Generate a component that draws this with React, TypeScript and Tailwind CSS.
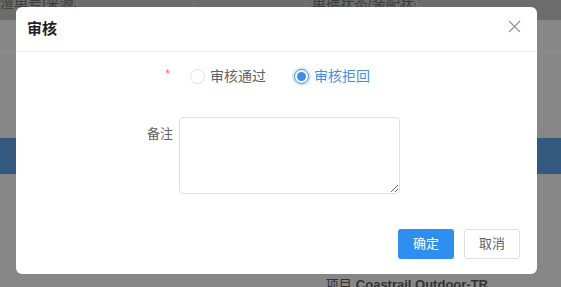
import React from "react";

export default function App() {
  const cjk = { fontFamily: '"Liberation Sans", "Noto Sans CJK SC", sans-serif' };
  return (
    <div className="relative w-[561px] h-[287px] overflow-hidden bg-[#878787]" style={cjk}>
      {/* background page (dimmed) */}
      <div className="flex h-[20px] bg-[#6c6c6c] text-[14px] leading-[14px] text-[#3c3c3c]">
        <div className="w-[77px] border-r border-[#777] -mt-[4px] whitespace-nowrap overflow-hidden">渣单号|来源单</div>
        <div className="w-[117px] border-r border-[#777]" />
        <div className="w-[112px] border-r border-[#777]" />
        <div className="w-[111px] border-r border-[#777] -mt-[4px] pl-[6px] whitespace-nowrap overflow-hidden">单据状态/装配状态/</div>
        <div className="flex-1" />
      </div>
      <div className="h-[32px] border-b border-[#8f8f8f]" />
      <div className="h-[86px]" />
      <div className="h-[36px] bg-[#33597f]" />
      <div className="h-[103px]" />
      <div className="flex justify-end pr-[73px] text-[13px] leading-[15px] text-[#333] whitespace-nowrap">
        <span className="mr-[4px]">项目</span>
        <span className="font-bold">Coastrail Outdoor-TR</span>
      </div>

      {/* dialog */}
      <div className="absolute left-[16px] top-[7px] w-[521px] h-[267px] bg-white rounded-[6px] flex flex-col">
        <div className="h-[45px] shrink-0 flex items-center justify-between px-[11px] border-b border-[#e8e8e8]">
          <span className="text-[15px] font-bold text-[#1f2329]">审核</span>
          <svg width="13" height="13" viewBox="0 0 13 13" className="mr-[5px] mt-[-5px]">
            <path d="M1 1 L12 12 M12 1 L1 12" stroke="#909399" strokeWidth="1.2" fill="none" />
          </svg>
        </div>
        <div className="flex flex-col">
          <div className="mt-[8px] h-[32px] flex items-center">
            <div className="w-[163px] flex justify-end pr-[9px]">
              <span className="text-[#f56c6c] text-[12px] leading-[12px] -mt-[4px]">*</span>
            </div>
            <div className="flex items-center pl-[11px] text-[14px] text-[#606266]">
              <span className="w-[15px] h-[15px] rounded-full border border-[#dcdfe6] bg-white" />
              <span className="ml-[5px]">审核通过</span>
              <span className="ml-[28px] w-[15px] h-[15px] rounded-full border-[1.5px] border-[#3b8fe8] bg-white flex items-center justify-center shadow-[0_0_0_2px_rgba(59,143,232,0.2)]">
                <span className="w-[9px] h-[9px] rounded-full bg-[#3b8fe8]" />
              </span>
              <span className="ml-[5px] text-[#3b8fe8]">审核拒回</span>
            </div>
          </div>
          <div className="mt-[25px] flex items-start">
            <div className="w-[157px] text-right text-[13px] text-[#606266] pt-[7px]">备注</div>
            <textarea className="ml-[6px] w-[221px] h-[77px] rounded-[4px] border border-[#dcdfe6] outline-none bg-white" />
          </div>
        </div>
        <div className="mt-[35px] flex justify-end pr-[17px] gap-[10px] text-[13px]">
          <button className="w-[56px] h-[30px] rounded-[3px] bg-[#2f8ff0] text-white">确定</button>
          <button className="w-[56px] h-[30px] rounded-[3px] border border-[#dcdfe6] bg-white text-[#606266]">取消</button>
        </div>
      </div>
    </div>
  );
}
